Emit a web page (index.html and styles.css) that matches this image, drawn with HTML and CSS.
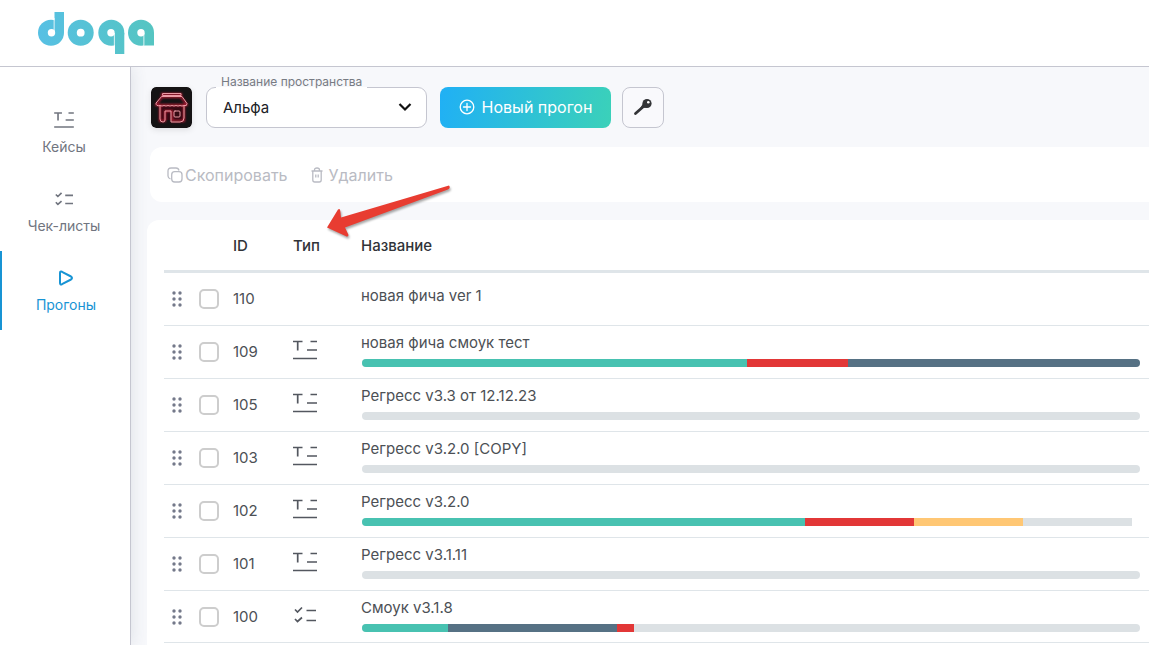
FILE: index.html
```html
<!DOCTYPE html>
<html lang="ru">
<head>
<meta charset="utf-8">
<meta name="viewport" content="width=device-width, initial-scale=1">
<title>doqa</title>
<link rel="stylesheet" href="styles.css">
</head>
<body>
<svg class="defs" aria-hidden="true">
  <symbol id="case" viewBox="0 0 24 22"><path d="M0 2.500h9.500M4.700 2.500v9M17.500 2.500H24M14 11h10M0 19.500h24"/></symbol>
  <symbol id="checklist" viewBox="0 0 24 22"><path d="M2 5.500l2.500 2.500L9 3.500M2 15l2.500 2.500L9 13.500M13.500 6.500h9.500M13.500 16.500H23"/></symbol>
  <symbol id="grip" viewBox="0 0 10 16"><circle cx="2" cy="2" r="1.700"/><circle cx="8" cy="2" r="1.700"/><circle cx="2" cy="8" r="1.700"/><circle cx="8" cy="8" r="1.700"/><circle cx="2" cy="14" r="1.700"/><circle cx="8" cy="14" r="1.700"/></symbol>
</svg>
<header class="header">
  <a class="brand" href="#" aria-label="doqa">
    <svg width="118" height="44" viewBox="37 11 118 44">
      <defs><linearGradient id="brand-fill" gradientUnits="userSpaceOnUse" x1="37" y1="0" x2="155" y2="0"><stop offset="0" stop-color="#57c0e4"/><stop offset="1" stop-color="#55c5c1"/></linearGradient></defs>
      <g fill="url(#brand-fill)">
        <circle cx="51" cy="32.700" r="13"/><rect x="54.500" y="12" width="9.500" height="21"/>
        <circle cx="80.700" cy="32.700" r="13"/>
        <circle cx="111.300" cy="32.700" r="13"/><rect x="115" y="33" width="9.300" height="21"/>
        <circle cx="141" cy="32.700" r="13"/><rect x="144" y="33" width="10" height="12.500"/>
      </g>
      <g fill="#fff"><circle cx="51.500" cy="32.700" r="3.700"/><circle cx="80.700" cy="32.700" r="3.900"/><circle cx="111" cy="32.700" r="3.700"/><circle cx="141" cy="32.700" r="3.700"/>
        <rect x="53.700" y="18" width=".8" height="15"/><rect x="113.900" y="33" width=".8" height="21"/><rect x="143.500" y="33" width=".8" height="13"/></g>
    </svg>
  </a>
</header>
<div class="shell">
  <nav class="sidebar">
    <a class="nav-item" href="#"><svg class="stroke" width="20" height="18"><use href="#case"/></svg><span>Кейсы</span></a>
    <a class="nav-item" href="#"><svg class="stroke" width="20" height="18"><use href="#checklist"/></svg><span>Чек-листы</span></a>
    <a class="nav-item active" href="#"><svg class="stroke" width="16" height="18" viewBox="0 0 16 18"><path d="M2 4q0-2 2-1.200l9 4.700q2 1.500 0 3l-9 4.700q-2 .8-2-1.200z"/></svg><span>Прогоны</span></a>
  </nav>
  <main class="content">
    <div class="controls">
      <svg class="space-logo" width="41" height="41" viewBox="0 0 41 41">
        <defs><filter id="glow" x="-20%" y="-20%" width="140%" height="140%"><feGaussianBlur stdDeviation="1.200"/></filter></defs>
        <rect width="41" height="41" rx="5" fill="#151314"/>
        <path d="M10 19h22v14H10z" fill="#350a12"/>
        <g fill="none" stroke-linejoin="round" stroke-linecap="round">
          <g stroke="#b81a36" stroke-width="2" filter="url(#glow)"><path d="M11 7h19v3H11zM11 10l-6 8h31l-6-8M9 19v15h5V24h7v10h12V19"/></g>
          <g stroke="#eb9aa4" stroke-width="1"><path d="M12 6.500h18v2H12zM11 9.500h20l5 7q0 3-3 2-2 1-4 0-2 1-4 0-2 1-4 0-2 1-4 0-2 1-4 0-2 1-4 0-4 1-4-2zM9 19v13q0 3 3 3 2 0 2-2v-9h6v11h9q4 0 4-4V19"/><rect x="23" y="24" width="6" height="6" rx="1"/></g>
        </g>
      </svg>
      <div class="field">
        <label class="field-label" for="space">Название пространства</label>
        <select class="field-select" id="space"><option>Альфа</option></select>
        <svg class="chevron" width="14" height="10" viewBox="0 0 14 10"><path d="M1.500 2L7 7.500 12.500 2"/></svg>
      </div>
      <button class="primary" type="button"><svg width="16" height="16" viewBox="0 0 16 16"><circle cx="8" cy="8" r="6.800"/><path d="M8 4.500v7M4.500 8h7"/></svg>Новый прогон</button>
      <button class="key" type="button" aria-label="Ключ"><svg width="20" height="20" viewBox="0 0 20 20"><path d="M2.500 16.500L11 9" stroke="#333437" stroke-width="2.800" stroke-linecap="round"/><path d="M7 11.500l3-5 4 4z" fill="#333437"/><circle cx="14" cy="6.500" r="4.600" fill="#333437"/><circle cx="15.300" cy="5.200" r="1.300" fill="#fff"/></svg></button>
    </div>
    <div class="toolbar">
      <button type="button" class="action copy" disabled><svg width="16" height="16" viewBox="0 0 16 16"><rect x="4.700" y="4.700" width="10.300" height="10.300" rx="3"/><path d="M3.500 12Q1 11 1 9V4q0-3 3-3h5q2.500 0 3 2.500"/></svg>Скопировать</button>
      <button type="button" class="action remove" disabled><svg width="12" height="16" viewBox="0 0 12 16"><path d="M.5 4h11M3.500 4V3q0-2 2.500-2t2.500 2v1M1.800 4v9q0 2 2 2h4.400q2 0 2-2V4M4.800 7.500v3M7.200 7.500v3"/></svg>Удалить</button>
    </div>
    <section class="card">
      <table class="runs">
        <colgroup><col class="c-grip"><col class="c-check"><col class="c-id"><col class="c-type"><col></colgroup>
        <thead><tr><th></th><th></th><th>ID</th><th>Тип</th><th>Название</th></tr></thead>
        <tbody>
          <tr><td><svg class="grip"><use href="#grip"/></svg></td><td><input type="checkbox" aria-label="110"></td><td>110</td><td></td><td class="name plain">новая фича ver 1</td></tr>
          <tr><td><svg class="grip"><use href="#grip"/></svg></td><td><input type="checkbox" aria-label="109"></td><td>109</td><td><svg class="type"><use href="#case"/></svg></td><td class="name">новая фича смоук тест<div class="bar"><i class="green" style="width:49.500%"></i><i class="red" style="width:13%"></i><i class="slate" style="width:37.500%"></i></div></td></tr>
          <tr><td><svg class="grip"><use href="#grip"/></svg></td><td><input type="checkbox" aria-label="105"></td><td>105</td><td><svg class="type"><use href="#case"/></svg></td><td class="name">Регресс v3.3 от 12.12.23<div class="bar"></div></td></tr>
          <tr><td><svg class="grip"><use href="#grip"/></svg></td><td><input type="checkbox" aria-label="103"></td><td>103</td><td><svg class="type"><use href="#case"/></svg></td><td class="name">Регресс v3.2.0 [COPY]<div class="bar"></div></td></tr>
          <tr><td><svg class="grip"><use href="#grip"/></svg></td><td><input type="checkbox" aria-label="102"></td><td>102</td><td><svg class="type"><use href="#case"/></svg></td><td class="name">Регресс v3.2.0<div class="bar short"><i class="green" style="width:57.500%"></i><i class="red" style="width:14.200%"></i><i class="amber" style="width:14.200%"></i></div></td></tr>
          <tr><td><svg class="grip"><use href="#grip"/></svg></td><td><input type="checkbox" aria-label="101"></td><td>101</td><td><svg class="type"><use href="#case"/></svg></td><td class="name">Регресс v3.1.11<div class="bar"></div></td></tr>
          <tr><td><svg class="grip"><use href="#grip"/></svg></td><td><input type="checkbox" aria-label="100"></td><td>100</td><td><svg class="type"><use href="#checklist"/></svg></td><td class="name">Смоук v3.1.8<div class="bar"><i class="green" style="width:11%"></i><i class="slate" style="width:21.800%"></i><i class="red" style="width:2.200%"></i></div></td></tr>
        </tbody>
      </table>
    </section>
    <svg class="pointer" width="128" height="58" viewBox="324 182 128 58" aria-hidden="true"><path d="M449 185.500Q451 188 448 189.500L345 227.500l3.500 7.500q-.5 2.500-3 1L327 227.500l11-18q2-1.500 2.300 1.500l.7 6.500z"/></svg>
  </main>
</div>
</body>
</html>
```
FILE: styles.css
```css
* { box-sizing: border-box; }
body {
  margin: 0;
  min-height: 100vh;
  display: flex;
  flex-direction: column;
  font: 15px/20px Inter, "Noto Sans", sans-serif;
  color: #4c5055;
  background: #fff;
}
button, select { font: inherit; }
.defs { display: none; }
.header {
  flex: none;
  height: 67px;
  padding: 11px 37px;
  border-bottom: 1px solid #c5c6d0;
  position: relative;
  z-index: 2;
  background: #fff;
}
.brand, .brand svg { display: block; width: 118px; }
.shell { flex: 1; display: flex; }
.sidebar {
  flex: none;
  width: 131px;
  padding-top: 26px;
  border-right: 1px solid #c5c6d0;
  background: #fff;
  box-shadow: 0 0 16px rgba(60, 70, 90, .14);
  z-index: 1;
}
.nav-item {
  display: flex;
  flex-direction: column;
  align-items: center;
  gap: 8px;
  height: 79px;
  padding-top: 18px;
  color: #71757f;
  font-size: 14px;
  text-decoration: none;
  border-left: 2px solid transparent;
  padding-right: 4px;
}
.nav-item.active { color: #1894d4; border-color: #1894d4; padding-right: 0; }
.stroke { fill: none; stroke: currentColor; stroke-width: 2; stroke-linejoin: round; }
.content { position: relative; flex: 1; min-width: 0; display: flex; flex-direction: column; background: #f7f8fb; }
.controls { display: flex; align-items: center; height: 80px; padding-left: 20px; }
.space-logo { margin-right: 14px; border-radius: 5px; box-shadow: 0 2px 6px rgba(0, 0, 0, .1); }
.field { position: relative; width: 221px; margin-right: 13px; }
.field-select {
  display: block;
  appearance: none;
  width: 100%;
  height: 41px;
  padding: 2px 16px 0;
  color: #202126;
  background: #fff;
  border: 1px solid #c5c6d0;
  border-radius: 9px;
}
.field-label {
  position: absolute;
  left: 10px;
  top: -15px;
  padding: 0 5px;
  font-size: 12px;
  color: #777b83;
  background: linear-gradient(#f7f8fb 15px, #fff 15px);
}
.chevron { position: absolute; right: 15px; top: 15px; fill: none; stroke: #111; stroke-width: 2.2px; pointer-events: none; }
.primary {
  display: flex;
  align-items: center;
  justify-content: center;
  gap: 7px;
  width: 171px;
  height: 41px;
  margin-right: 11px;
  padding: 0;
  border: 0;
  border-radius: 8px;
  color: #fff;
  font-size: 16px;
  background: linear-gradient(100deg, #20b0f5, #3bd1b9);
}
.primary svg { fill: none; stroke: #fff; stroke-width: 1.3px; stroke-linecap: round; }
.key {
  display: grid;
  place-items: center;
  width: 42px;
  height: 41px;
  padding: 0;
  border: 1px solid #c5c6d0;
  border-radius: 8px;
  background: #f9f9fc;
}
.toolbar {
  display: flex;
  align-items: center;
  gap: 23px;
  height: 55px;
  margin: 0 0 18px 19px;
  padding-left: 17px;
  border-radius: 12px 0 0 12px;
  background: #fff;
}
.action {
  display: flex;
  align-items: center;
  gap: 2px;
  padding: 0;
  border: 0;
  color: #b9bbc3;
  background: none;
  font-size: 16px;
}
.remove { gap: 6px; }
.action svg { fill: none; stroke: currentColor; stroke-width: 1.3px; }
.card {
  flex: 1;
  margin-left: 16px;
  padding-left: 17px;
  border-radius: 12px 0 0 0;
  background: #fff;
}
.runs { width: 100%; table-layout: fixed; border-collapse: separate; border-spacing: 0; }
.c-grip { width: 35px; }
.c-check { width: 34px; }
.c-id { width: 60px; }
.c-type { width: 68px; }
th {
  height: 53px;
  padding: 2px 0 0;
  text-align: left;
  font-weight: 500;
  color: #303338;
  border-bottom: 3px solid #dfe5e9;
}
td { height: 53px; padding: 0; border-bottom: 1px solid #dfe5e9; }
tbody tr:last-child td { height: 52px; }
.grip { display: block; width: 10px; height: 16px; margin-left: 8px; fill: #74798a; }
input[type="checkbox"] {
  appearance: none;
  display: block;
  width: 20px;
  height: 20px;
  margin: 0;
  border: 2px solid #cdcdcd;
  border-radius: 5px;
  background: #fff;
}
.type { display: block; width: 24px; height: 22px; margin-bottom: 4px; fill: none; stroke: #53575f; stroke-width: 1.7px; }
.name { padding: 0 9px 4px 0; }
.name.plain { padding-bottom: 6px; }
.bar { display: flex; height: 8px; margin: 6px 0 0 1px; overflow: hidden; border-radius: 4px; background: #dce1e4; }
.bar.short { margin-right: 8px; border-radius: 4px 0 0 4px; }
.green { background: #48c2b1; }
.red { background: #e23737; }
.slate { background: #567184; }
.amber { background: #ffc774; }
.pointer { position: absolute; left: 193px; top: 115px; fill: #e83c31; filter: drop-shadow(1px 2px 1px rgba(0, 0, 0, .35)); }
```
